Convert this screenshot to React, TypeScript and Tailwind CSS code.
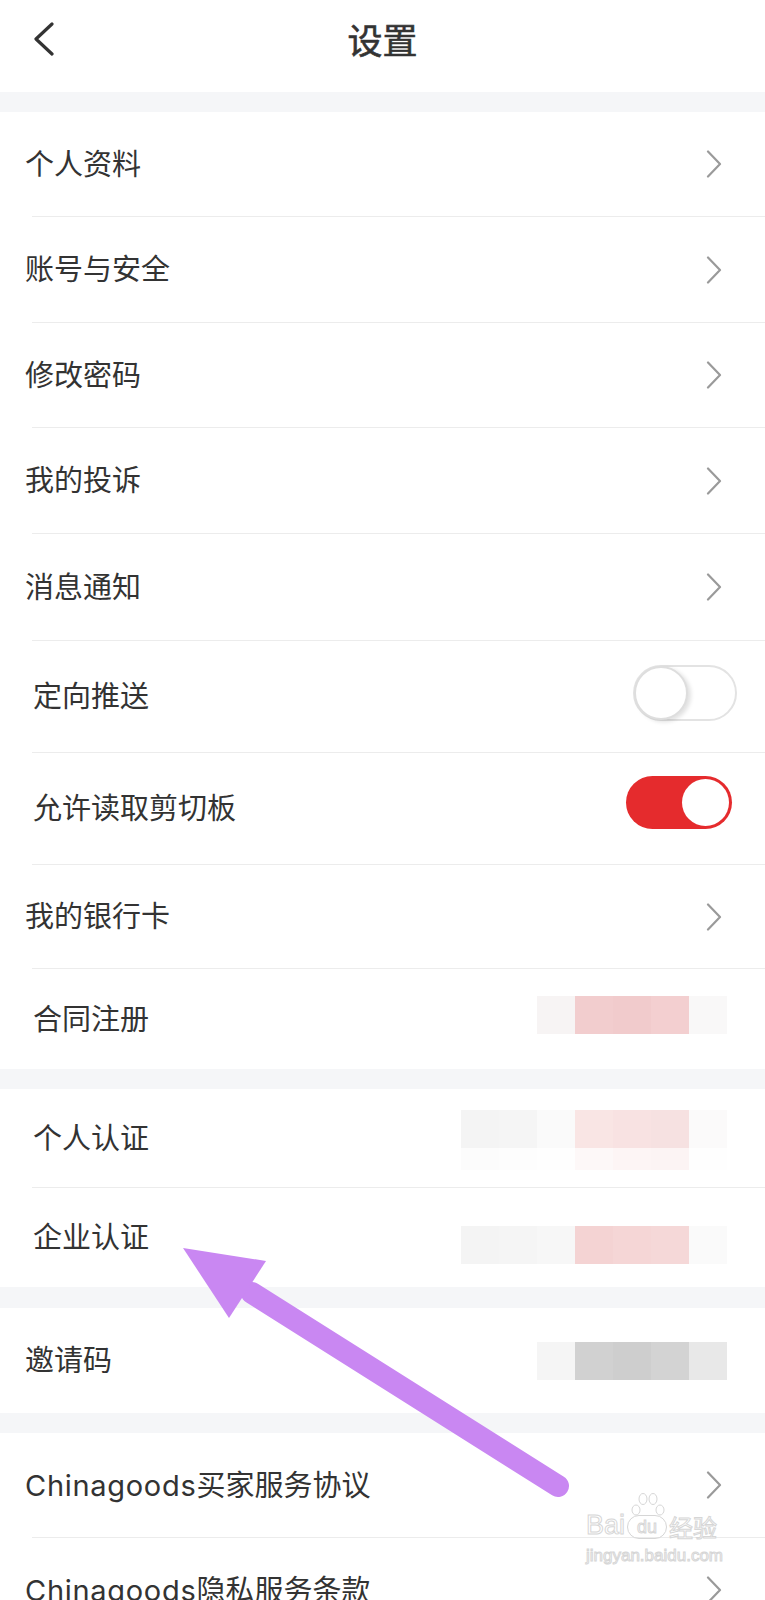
import React from 'react';

type Cell = string;

interface RowProps {
  label: string;
  height: number;
  indent?: 'narrow' | 'wide';
  right?: React.ReactNode;
  divider?: boolean;
}

const Chevron = () => (
  <svg width="16" height="28" viewBox="0 0 16 28" fill="none" className="shrink-0">
    <path d="M2 1.5 L14 14 L2 26.5" stroke="#9a9a9a" strokeWidth="2.2" strokeLinecap="round" strokeLinejoin="round" />
  </svg>
);

const Blocks = ({ cells, sub }: { cells: Cell[]; sub?: Cell[] }) => (
  <div className="flex flex-col">
    <div className="flex">
      {cells.map((c, i) => (
        <div key={i} className="w-[38px] h-[38px]" style={{ background: c }} />
      ))}
    </div>
    {sub && (
      <div className="flex">
        {sub.map((c, i) => (
          <div key={i} className="w-[38px] h-[22px]" style={{ background: c }} />
        ))}
      </div>
    )}
  </div>
);

// latin prefix gets a touch of tracking so it runs as wide as the phone font
const Label = ({ text }: { text: string }) => {
  const m = text.match(/^([A-Za-z]+)(.*)$/);
  if (!m) return <>{text}</>;
  return (
    <>
      <span className="tracking-[0.7px]">{m[1]}</span>
      {m[2]}
    </>
  );
};

const Row = ({ label, height, indent = 'narrow', right, divider = true }: RowProps) => (
  <>
    <div
      className={`flex items-center justify-between bg-white ${indent === 'wide' ? 'pl-[33px]' : 'pl-[25px]'}`}
      style={{ height: divider ? height - 1 : height }}
    >
      <p className="text-[29px] text-[#333] leading-none whitespace-nowrap">
        <Label text={label} />
      </p>
      {right}
    </div>
    {divider && (
      <div className="bg-white">
        <div className="ml-[32px] h-px bg-[#ececec]" />
      </div>
    )}
  </>
);

const Gap = ({ h }: { h: number }) => <div className="bg-[#f5f6f8]" style={{ height: h }} />;

const chevronRight = (
  <div className="pr-[43px] flex items-center">
    <Chevron />
  </div>
);

export default function App() {
  return (
    <div className="relative w-[765px] h-[1600px] overflow-hidden bg-white font-[Inter,'Noto_Sans_CJK_SC',sans-serif]">
      {/* header */}
      <div className="h-[92px] flex items-center justify-center relative bg-white">
        <svg width="24" height="36" viewBox="0 0 24 36" className="absolute left-[32px] top-[22px]" fill="none">
          <path d="M20 2 L4 17 L20 32" stroke="#333" strokeWidth="3.2" strokeLinecap="round" strokeLinejoin="round" />
        </svg>
        <h1 className="text-[35px] font-normal text-[#333] leading-none -mt-[10px] [-webkit-text-stroke:0.6px_#333]">设置</h1>
      </div>
      <Gap h={20} />

      <Row label="个人资料" height={105} right={chevronRight} />
      <Row label="账号与安全" height={106} right={chevronRight} />
      <Row label="修改密码" height={105} right={chevronRight} />
      <Row label="我的投诉" height={106} right={chevronRight} />
      <Row label="消息通知" height={107} right={chevronRight} />
      <Row
        label="定向推送"
        indent="wide"
        height={112}
        right={
          <div className="pr-[28px] -mt-[8px]">
            <div className="w-[104px] h-[56px] rounded-full border-2 border-[#e3e3e3] bg-white relative">
              <div className="absolute left-[-1px] top-[-1px] w-[54px] h-[54px] rounded-full bg-white border-2 border-[#dedede] shadow-[3px_2px_4px_rgba(0,0,0,0.12)]" />
            </div>
          </div>
        }
      />
      <Row
        label="允许读取剪切板"
        indent="wide"
        height={112}
        right={
          <div className="pr-[33px] -mt-[12px]">
            <div className="w-[106px] h-[53px] rounded-full bg-[#e52b2d] relative">
              <div className="absolute right-[3px] top-[3px] w-[47px] h-[47px] rounded-full bg-white" />
            </div>
          </div>
        }
      />
      <Row label="我的银行卡" height={104} right={chevronRight} />
      <Row
        label="合同注册"
        indent="wide"
        height={100}
        divider={false}
        right={
          <div className="pr-[38px] -mt-[8px]">
            <Blocks cells={['#f7f4f4', '#f2cdce', '#f1cbcc', '#f3cfd0', '#f9f8f8']} />
          </div>
        }
      />
      <Gap h={20} />

      <Row
        label="个人认证"
        indent="wide"
        height={99}
        right={
          <div className="pr-[38px] mt-[4px]">
            <Blocks
              cells={['#f4f4f4', '#f5f5f5', '#fafafa', '#f9e5e4', '#f8e2e2', '#f6e1e1', '#fbfafa']}
              sub={['#fcfcfc', '#fdfdfd', '#fefefe', '#fdf8f8', '#fdf5f5', '#fcf4f4', '#fefefe']}
            />
          </div>
        }
      />
      <Row
        label="企业认证"
        indent="wide"
        height={99}
        divider={false}
        right={
          <div className="pr-[38px] mt-[14px]">
            <Blocks cells={['#f4f4f4', '#f5f5f5', '#f7f7f7', '#f4d3d3', '#f5d6d6', '#f5d8d8', '#fafafa']} />
          </div>
        }
      />
      <Gap h={21} />

      <Row
        label="邀请码"
        height={105}
        divider={false}
        right={
          <div className="pr-[38px]">
            <Blocks cells={['#f5f5f5', '#d1d1d1', '#cecece', '#d3d3d3', '#e8e8e8']} />
          </div>
        }
      />
      <Gap h={20} />

      <Row label="Chinagoods买家服务协议" height={105} right={chevronRight} />
      <Row label="Chinagoods隐私服务条款" height={105} right={chevronRight} />

      {/* watermark */}
      <div className="absolute left-[586px] top-[1512px] flex flex-col items-start pointer-events-none">
        <div className="flex items-end gap-[2px] relative">
          <span className="text-[27px] leading-none font-['Liberation_Sans',sans-serif] text-white [-webkit-text-stroke:1px_#d6d6d6]">Bai</span>
          <span className="relative flex items-center justify-center w-[40px] h-[24px] rounded-full border border-[#d6d6d6] text-[18px] leading-none font-['Liberation_Sans',sans-serif] text-white [-webkit-text-stroke:1px_#d6d6d6]">
            du
            <svg width="40" height="26" viewBox="0 0 40 26" className="absolute left-0 -top-[26px]" fill="none" stroke="#d6d6d6" strokeWidth="1">
              <ellipse cx="8" cy="20" rx="4" ry="5" />
              <ellipse cx="15" cy="9" rx="4" ry="5.5" />
              <ellipse cx="25" cy="9" rx="4" ry="5.5" />
              <ellipse cx="32" cy="20" rx="4" ry="5" />
            </svg>
          </span>
          <span className="text-[24px] leading-none font-['Noto_Sans_CJK_SC',sans-serif] text-white [-webkit-text-stroke:1px_#d6d6d6]">经验</span>
        </div>
        <span className="mt-[8px] text-[17px] leading-none font-['Liberation_Sans',sans-serif] text-white [-webkit-text-stroke:1px_#d6d6d6]">jingyan.baidu.com</span>
      </div>

      {/* annotation arrow */}
      <svg className="absolute inset-0 pointer-events-none" width="765" height="1600" viewBox="0 0 765 1600">
        <line x1="252" y1="1293" x2="558" y2="1486" stroke="#c987f2" strokeWidth="22" strokeLinecap="round" />
        <polygon points="183,1248 266,1261 229,1318" fill="#c987f2" />
      </svg>
    </div>
  );
}
